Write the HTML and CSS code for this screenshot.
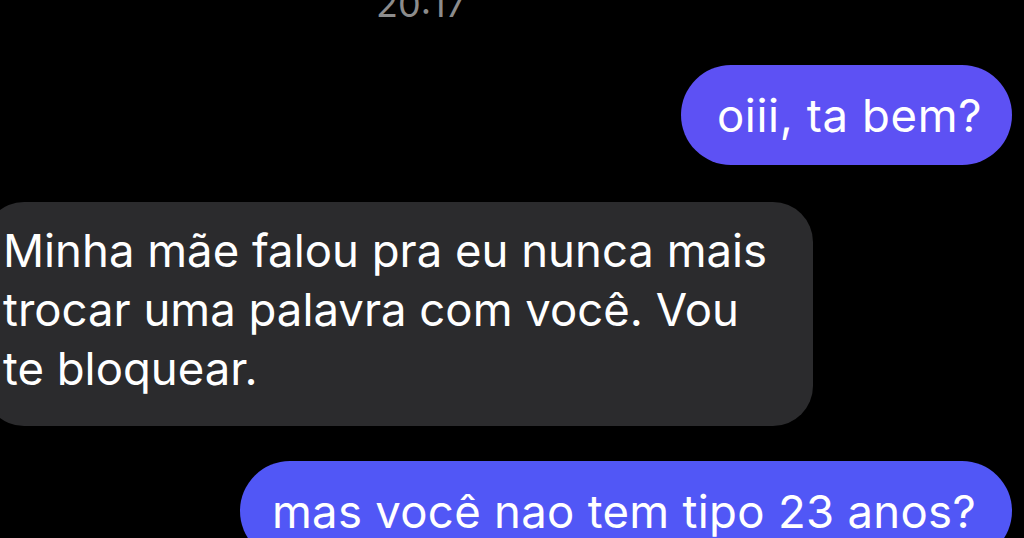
FILE: index.html
```html
<!DOCTYPE html>
<html lang="pt">
<head>
<meta charset="utf-8">
<title>Chat</title>
<link rel="stylesheet" href="styles.css">
</head>
<body>
<div class="chat">
  <div class="time">20:17</div>
  <div class="row out first">
    <div class="bubble sent">oiii, ta bem?</div>
  </div>
  <div class="row in">
    <div class="bubble received">Minha mãe falou pra eu nunca mais<br>trocar uma palavra com você. Vou<br>te bloquear.</div>
  </div>
  <div class="row out last">
    <div class="bubble sent blue">mas você nao tem tipo 23 anos?</div>
  </div>
</div>
</body>
</html>
```
FILE: styles.css
```css
html, body {
  margin: 0;
  padding: 0;
  background: #000;
  overflow: hidden;
  height: 538px;
}

.chat {
  display: flex;
  flex-direction: column;
  font-family: Inter, "Liberation Sans", sans-serif;
  color: #fff;
}

.time {
  font-size: 36px;
  line-height: 36px;
  height: 36px;
  margin-top: -14px;
  color: #8c8c8c;
  padding-left: 376px;
}

.row {
  display: flex;
}

.row.out {
  justify-content: flex-end;
  padding-right: 12px;
}

.row.first {
  margin-top: 43px;
}

.row.in {
  margin-top: 37px;
  margin-left: -16px;
}

.row.last {
  margin-top: 35px;
}

.bubble {
  font-size: 45.5px;
  white-space: nowrap;
}

.sent {
  background: #5d51f4;
  border-radius: 50px;
  height: 100px;
  box-sizing: border-box;
  line-height: 98px;
  padding: 2px 30px 0 36px;
  letter-spacing: 0.6px;
}

.sent.blue {
  background: #5157f6;
  padding: 2px 36px 0 32px;
  letter-spacing: 0.3px;
}

.received {
  background: #2b2b2d;
  border-radius: 40px;
  line-height: 59px;
  padding: 19px 46px 28px 19px;
}
```
